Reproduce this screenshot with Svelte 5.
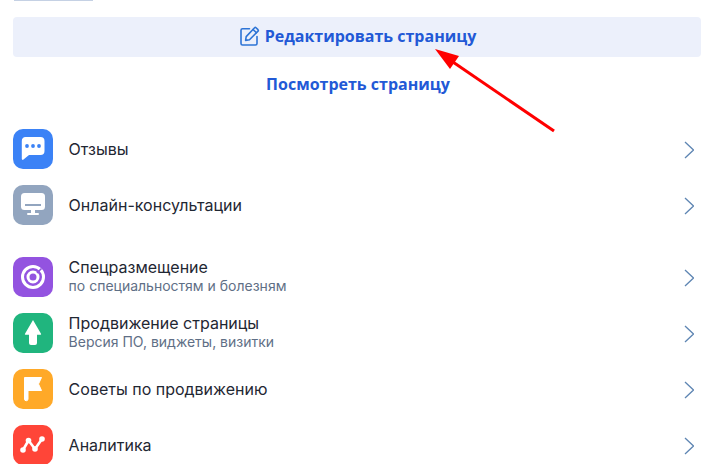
<script>
  // Menu groups, icon is picked by name in the markup
  const groups = [
    [
      { icon: 'chat', color: '#3b82f6', title: 'Отзывы' },
      { icon: 'monitor', color: '#92a5bf', title: 'Онлайн-консультации' }
    ],
    [
      { icon: 'target', color: '#9353e0', title: 'Спецразмещение', sub: 'по специальностям и болезням' },
      { icon: 'up', color: '#20b57e', title: 'Продвижение страницы', sub: 'Версия ПО, виджеты, визитки' },
      { icon: 'flag', color: '#ffa928', title: 'Советы по продвижению' },
      { icon: 'chart', color: '#ff4538', title: 'Аналитика' }
    ]
  ];
</script>

<div class="page">
  <div class="top-strip"></div>

  <button class="edit">
    <svg class="edit-icon" viewBox="0 0 20 20" width="20" height="20" fill="none" stroke="#2d74d6" stroke-width="1.6" stroke-linejoin="round" stroke-linecap="round">
      <path d="M9.5 2.800H2.500a1.500 1.500 0 0 0-1.500 1.500V17.500A1.500 1.500 0 0 0 2.500 19h13a1.500 1.500 0 0 0 1.500-1.500V10.500" />
      <path d="M6.200 10.600 14.600 1.800a1 1 0 0 1 1.400 0l2 1.900a1 1 0 0 1 0 1.400l-8.500 8.600-3.900.7z" />
      <path d="M13 3.500l3.400 3.300" />
    </svg>
    <span>Редактировать страницу</span>
  </button>

  <a class="view" href="#view">Посмотреть страницу</a>

  {#each groups as group}
    <ul class="group">
      {#each group as item}
        <li class="row">
          <span class="icon" style="background: {item.color}">
            <svg viewBox="0 0 40 40" width="40" height="40">
              {#if item.icon === 'chat'}
                <path d="M12.500 8h15a4 4 0 0 1 4 4v10a4 4 0 0 1-4 4H16l-5.500 4.600a1 1 0 0 1-1.700-.8V12a4 4 0 0 1 3.700-4z" fill="#fff" />
                <circle cx="14" cy="17" r="1.900" fill="#3b82f6" />
                <circle cx="20" cy="17" r="1.900" fill="#3b82f6" />
                <circle cx="26" cy="17" r="1.900" fill="#3b82f6" />
              {:else if item.icon === 'monitor'}
                <rect x="8" y="8" width="24" height="17" rx="3.500" fill="#fff" />
                <rect x="12" y="19" width="16" height="2" fill="#92a5bf" />
                <rect x="18" y="25" width="4" height="3" fill="#fff" />
                <rect x="14" y="28" width="12" height="2" rx="1" fill="#fff" />
              {:else if item.icon === 'target'}
                <circle cx="20" cy="20" r="10.500" fill="none" stroke="#fff" stroke-width="3" />
                <circle cx="20" cy="20" r="5" fill="none" stroke="#fff" stroke-width="3" />
                <path d="M24 16 28.500 11.500" stroke="#9353e0" stroke-width="1.600" />
              {:else if item.icon === 'up'}
                <path d="M20 7 28 20.800a.6.6 0 0 1-.5.9H24V30a2 2 0 0 1-2 2h-4a2 2 0 0 1-2-2v-8.300h-3.500a.6.6 0 0 1-.5-.9z" fill="#fff" />
              {:else if item.icon === 'flag'}
                <path d="M11.500 8.500h17l-3 6.500 3 6.500H15V30a1.750 1.750 0 0 1-3.500 0z" fill="#fff" stroke="#fff" stroke-linejoin="round" />
              {:else}
                <path d="M10 25 15.500 15.500 22 24 29 14" fill="none" stroke="#fff" stroke-width="2.600" stroke-linejoin="round" />
                <circle cx="10" cy="25" r="2.800" fill="#fff" />
                <circle cx="15.500" cy="15.500" r="2.800" fill="#fff" />
                <circle cx="22" cy="24" r="2.800" fill="#fff" />
                <circle cx="29" cy="14" r="2.800" fill="#fff" />
              {/if}
            </svg>
          </span>
          <span class="text">
            <span class="title" class:solo={!item.sub}>{item.title}</span>
            {#if item.sub}
              <span class="sub">{item.sub}</span>
            {/if}
          </span>
          <svg class="chevron" viewBox="0 0 10 18" width="10" height="18" fill="none" stroke="#5f86b3" stroke-width="1.300">
            <path d="M1 1l8.500 8-8.500 8" />
          </svg>
        </li>
      {/each}
    </ul>
  {/each}

  <!-- Annotation arrow drawn over the page -->
  <svg class="arrow" viewBox="0 0 713 464" width="713" height="464">
    <path d="M554 131 450 60" stroke="#f00" stroke-width="3" fill="none" />
    <path d="M435 49 459 56 450 69z" fill="#f00" />
  </svg>
</div>

<style>
  :global(body) {
    margin: 0;
    background: #fff;
  }

  .page {
    position: relative;
    width: 713px;
    height: 464px;
    overflow: hidden;
    padding: 0 12px 0 13px;
    box-sizing: border-box;
  }

  .top-strip {
    width: 79px;
    height: 1px;
    margin-left: 1px;
    background: #c5d1e4;
  }

  .edit {
    display: flex;
    align-items: center;
    justify-content: center;
    gap: 5px;
    width: 100%;
    height: 40px;
    margin-top: 16px;
    padding: 0 0 2px 2px;
    border: none;
    border-radius: 4px;
    background: #ecf0fb;
    color: #2259d6;
    font: 700 16px "Open Sans", sans-serif;
  }

  .edit-icon {
    flex: none;
  }

  .view {
    display: block;
    margin-top: 16px;
    padding-left: 2px;
    text-align: center;
    text-decoration: none;
    color: #2259d6;
    font: 700 16px/22px "Open Sans", sans-serif;
  }

  .group {
    list-style: none;
    margin: 0;
    padding: 0;
  }

  .group:first-of-type {
    margin-top: 34px;
  }

  .group + .group {
    margin-top: 16px;
  }

  .row {
    display: flex;
    align-items: flex-start;
    height: 56px;
  }

  .icon {
    flex: none;
    width: 40px;
    height: 40px;
    border-radius: 10px;
  }

  .icon svg {
    display: block;
  }

  .text {
    flex: 1;
    display: flex;
    flex-direction: column;
    justify-content: center;
    height: 38px;
    margin-left: 15.6px;
    font-family: Inter, sans-serif;
  }

  .title {
    font-size: 16px;
    line-height: 20px;
    color: #1f2733;
  }

  .title.solo {
    padding-top: 2px;
  }

  .sub {
    font-size: 14px;
    line-height: 18px;
    color: #5f6f86;
  }

  .chevron {
    flex: none;
    margin: 12px 7px 0 0;
  }

  .arrow {
    position: absolute;
    left: 0;
    top: 0;
    pointer-events: none;
  }
</style>
